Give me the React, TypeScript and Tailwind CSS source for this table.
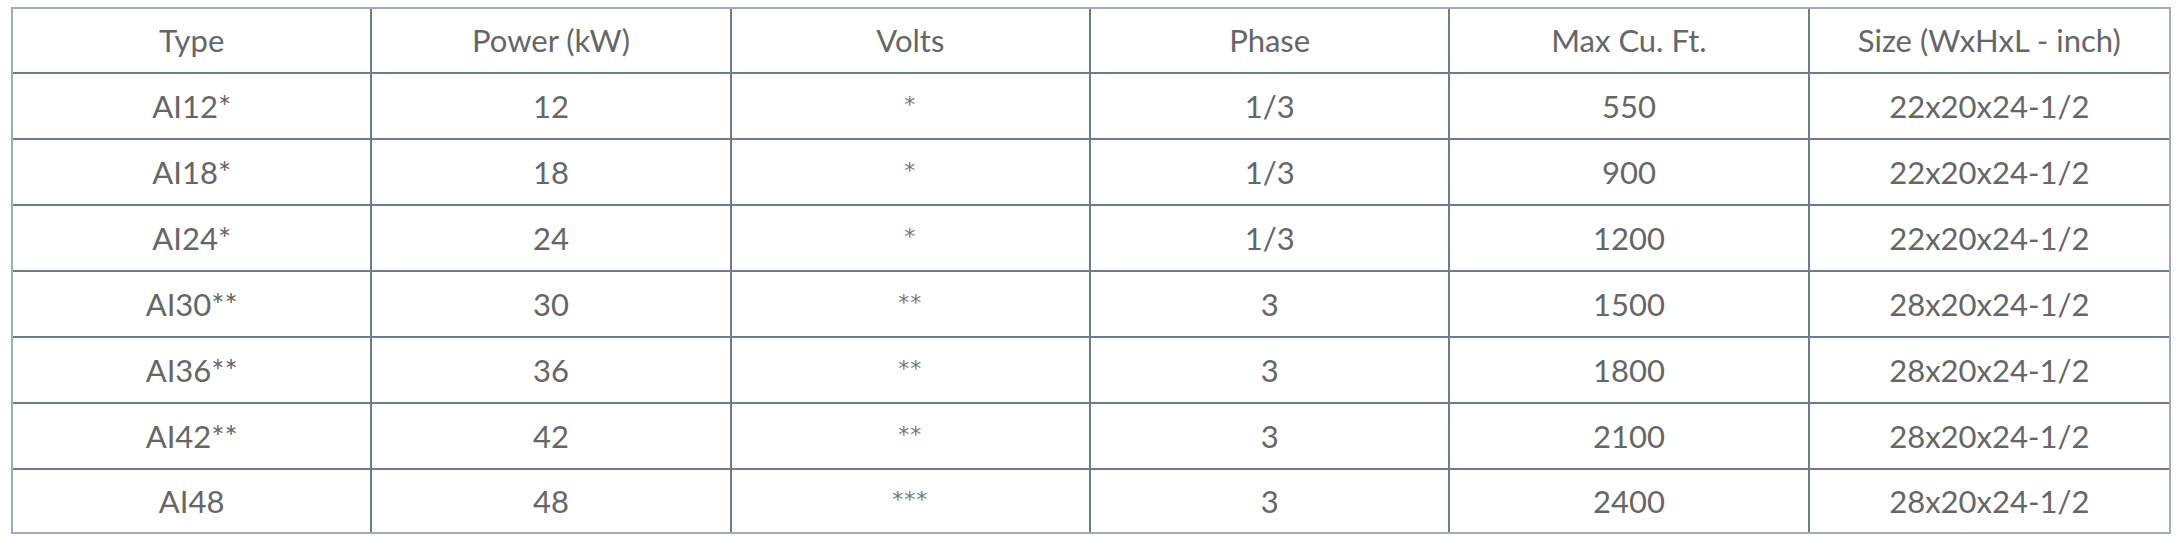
import React from "react";

const headers = ["Type", "Power (kW)", "Volts", "Phase", "Max Cu. Ft.", "Size (WxHxL - inch)"];
const rows: string[][] = [
  ["AI12*", "12", "*", "1/3", "550", "22x20x24-1/2"],
  ["AI18*", "18", "*", "1/3", "900", "22x20x24-1/2"],
  ["AI24*", "24", "*", "1/3", "1200", "22x20x24-1/2"],
  ["AI30**", "30", "**", "3", "1500", "28x20x24-1/2"],
  ["AI36**", "36", "**", "3", "1800", "28x20x24-1/2"],
  ["AI42**", "42", "**", "3", "2100", "28x20x24-1/2"],
  ["AI48", "48", "***", "3", "2400", "28x20x24-1/2"],
];

export default function App() {
  return (
    <div className="bg-white w-[2180px] h-[538px] pt-[7px] pl-[11px]">
      <table
        className="w-[2160px] border-separate border-spacing-0 border-2 border-[#a0acbe] text-[#666666] text-[31px] table-fixed"
        style={{ fontFamily: "Lato, 'Noto Sans', sans-serif" }}
      >
        <thead>
          <tr className="h-[65px]">
            {headers.map((h, i) => (
              <th
                key={h}
                className={`font-normal text-center align-middle p-0 border-b-2 border-[#6e7a8d] ${i < 5 ? "border-r-2" : ""}`}
              >
                {h}
              </th>
            ))}
          </tr>
        </thead>
        <tbody>
          {rows.map((r, ri) => (
            <tr key={ri} className={ri === 6 ? "h-[62px]" : "h-[66px]"}>
              {r.map((c, ci) => (
                <td
                  key={ci}
                  className={`text-center align-middle p-0 border-[#6e7a8d] ${ci < 5 ? "border-r-2" : ""} ${ri < 6 ? "border-b-2" : ""}`}
                >
                  {ci === 2 ? (
                    <span
                      className="inline-block text-[22px] text-[#777777] tracking-[1px] -translate-y-[6px]"
                      style={{ fontFamily: "'DejaVu Sans', sans-serif" }}
                    >
                      {c}
                    </span>
                  ) : (
                    c
                  )}
                </td>
              ))}
            </tr>
          ))}
        </tbody>
      </table>
    </div>
  );
}
